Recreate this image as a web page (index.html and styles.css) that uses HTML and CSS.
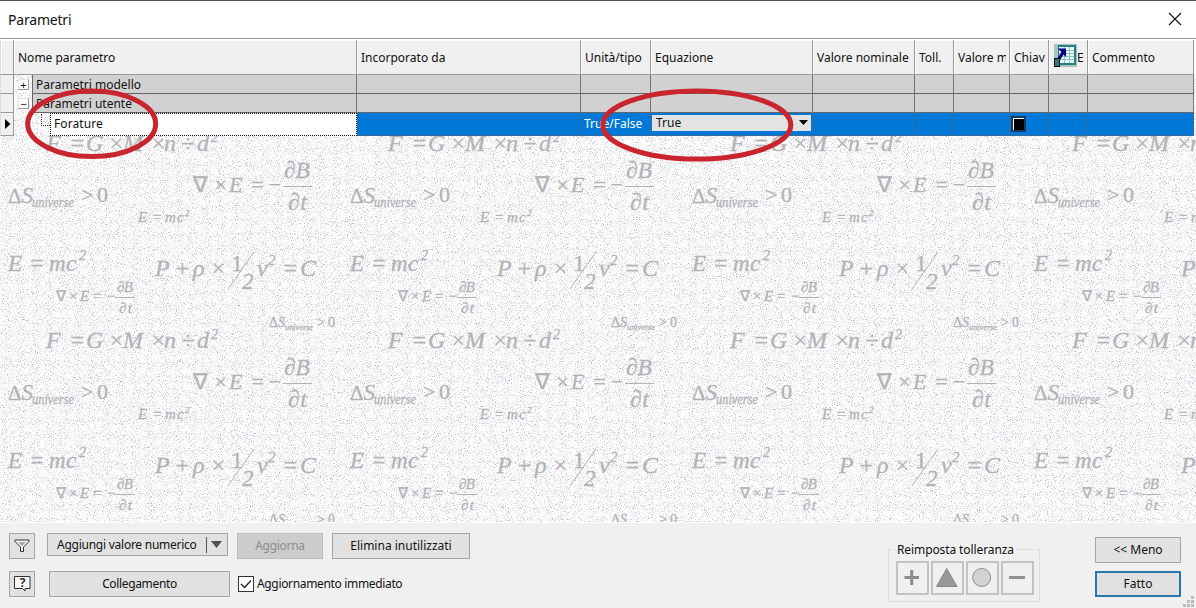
FILE: index.html
```html
<!DOCTYPE html>
<html lang="it">
<head>
    <meta charset="UTF-8">
    <meta name="viewport" content="width=device-width, initial-scale=1.0">
    <title>Parametri</title>
    <link rel="stylesheet" href="styles.css">
</head>
<body>
    <div class="dialog">
        <div class="titlebar">
            <h1>Parametri</h1>
            <svg class="close" width="14" height="14" viewBox="0 0 14 14"><path d="M1 1 L13 13 M13 1 L1 13" stroke="#111" stroke-width="1.1"/></svg>
        </div>

        <div class="content">
            <!-- formula wallpaper behind the grid -->
            <svg class="wallpaper" width="1196" height="447" viewBox="0 75 1196 447">
                <defs>
                    <filter id="speckle" x="0" y="0" width="100%" height="100%" color-interpolation-filters="sRGB">
                        <feTurbulence type="fractalNoise" baseFrequency="0.93" numOctaves="3" seed="7"/>
                        <feColorMatrix values="0 0 0 0 0.68  0 0 0 0 0.69  0 0 0 0 0.74  3.4 0 0 0 -1.85"/>
                    </filter>
                    <g id="formulas">
                        <text x="46 69 86 108 123 150 164 181 197" y="151" font-size="24">F=G×M×n÷d</text>
                        <text x="211" y="142" font-size="14">2</text>
                        <text x="8" y="203" font-size="21"><tspan font-style="normal">Δ</tspan><tspan font-size="23">S</tspan></text>
                        <text x="32" y="207" font-size="14" textLength="42" lengthAdjust="spacingAndGlyphs">universe</text>
                        <text x="81 97" y="202" font-size="22" font-style="normal">&gt;0</text>
                        <text x="193 213 229 250 267" y="192" font-size="22"><tspan font-style="normal">∇</tspan>×E=−</text>
                        <text x="284" y="178" font-size="24" textLength="26" lengthAdjust="spacingAndGlyphs">∂B</text>
                        <path d="M283 186.5H312"/>
                        <text x="288" y="210" font-size="24" textLength="19">∂t</text>
                        <text x="138 152 165 177" y="222" font-size="15">E=mc</text>
                        <text x="185" y="216" font-size="9">2</text>
                        <text x="8 29 49 66" y="271" font-size="23">E=mc</text>
                        <text x="79" y="260" font-size="14">2</text>
                        <text x="155 174 193 210" y="276" font-size="24">P+ρ×</text>
                        <text x="231" y="271" font-size="24" font-style="normal">1</text>
                        <path d="M228 289L254 252"/>
                        <text x="242" y="289" font-size="23">2</text>
                        <text x="257" y="276" font-size="24">v</text>
                        <text x="268" y="265" font-size="15">2</text>
                        <text x="282 300" y="276" font-size="24">=C</text>
                        <text x="56 68 80 92 106" y="301" font-size="15"><tspan font-style="normal">∇</tspan>×E=−</text>
                        <text x="117" y="292" font-size="15" textLength="16">∂B</text>
                        <path d="M115 297.5H135"/>
                        <text x="119" y="313" font-size="15" textLength="13">∂t</text>
                        <text x="269" y="327" font-size="14"><tspan font-style="normal">Δ</tspan>S</text>
                        <text x="285" y="330" font-size="9" textLength="28" lengthAdjust="spacingAndGlyphs">universe</text>
                        <text x="317 328" y="327" font-size="14" font-style="normal">&gt;0</text>
                    </g>
                </defs>
                <rect y="75" width="1196" height="447" fill="#fcfcfd"/>
                <rect y="75" width="1196" height="447" filter="url(#speckle)"/>
                <use href="#formulas"/>
                <use href="#formulas" x="342"/>
                <use href="#formulas" x="684"/>
                <use href="#formulas" x="1026"/>
                <use href="#formulas" y="197"/>
                <use href="#formulas" x="342" y="197"/>
                <use href="#formulas" x="684" y="197"/>
                <use href="#formulas" x="1026" y="197"/>
            </svg>

            <div class="grid">
                <div class="row head">
                    <div></div>
                    <div>Nome parametro</div>
                    <div>Incorporato da</div>
                    <div>Unità/tipo</div>
                    <div>Equazione</div>
                    <div>Valore nominale</div>
                    <div>Toll.</div>
                    <div class="clipped"><span>Valore m</span></div>
                    <div class="clipped"><span>Chiav</span></div>
                    <div class="export">
                        <svg width="24" height="24" viewBox="0 0 24 24">
                            <rect x="1" width="23" height="23" fill="#a9c3c4"/>
                            <path d="M5 1H23V21H5Z" fill="#26807f"/>
                            <path d="M6 3H21V19H6Z" fill="#e9f7f6"/>
                            <path d="M6 6.500H21M6 9.500H21M6 12.500H21M6 15.500H21M11.500 3V19M16.500 3V19" stroke="#8cc4c2"/>
                            <path d="M5 4.500H13V13L10.500 10.500L7 16L4.500 14L8.500 8Z" fill="#000080"/>
                            <rect x="1.500" y="14.500" width="5" height="8" fill="#367577" stroke="#111"/>
                        </svg><span>E</span>
                    </div>
                    <div>Commento</div>
                </div>
                <div class="row group">
                    <div></div>
                    <div class="tree"><i class="toggle">+</i><span>Parametri modello</span></div>
                    <div></div><div></div><div></div><div></div><div></div><div></div><div></div><div></div><div></div>
                </div>
                <div class="row group">
                    <div></div>
                    <div class="tree"><i class="toggle">−</i><span>Parametri utente</span></div>
                    <div></div><div></div><div></div><div></div><div></div><div></div><div></div><div></div><div></div>
                </div>
                <div class="row selected">
                    <div class="marker"><svg width="6" height="10" viewBox="0 0 6 10"><path d="M0 0L5.500 5L0 10Z"/></svg></div>
                    <div class="tree"><i class="branch"></i><span class="edit">Forature</span></div>
                    <div></div>
                    <div class="unit">True/False</div>
                    <div class="combo"><div><span>True</span><svg width="9" height="5" viewBox="0 0 9 5"><path d="M0 0H9L4.500 5Z"/></svg></div></div>
                    <div></div>
                    <div></div>
                    <div></div>
                    <div class="key"><i></i></div>
                    <div></div>
                    <div></div>
                </div>
            </div>
        </div>

        <div class="footer">
            <div class="actions">
                <div class="line">
                    <button class="button icon">
                        <svg width="16" height="14" viewBox="0 0 16 14" fill="none" stroke="#30323a"><path d="M1 1H15V2.500L9.500 8V12.500H6.500V8L1 2.500Z" fill="#f5f5f5"/><path d="M4 3H12L8 7Z" fill="#a8a8b0" stroke="none"/></svg>
                    </button>
                    <button class="button split"><span>Aggiungi valore numerico</span><i><svg width="11" height="7" viewBox="0 0 11 7"><path d="M0 0H11L5.500 7Z" fill="#505050"/></svg></i></button>
                    <button class="button update" disabled>Aggiorna</button>
                    <button class="button purge">Elimina inutilizzati</button>
                </div>
                <div class="line">
                    <button class="button icon">
                        <svg width="17" height="17" viewBox="0 0 17 17" fill="#f7f7f7" stroke="#30323a"><path d="M.5 1.500H16V13.500H11V16L8.500 13.500H.5Z"/><text x="8.500" y="12" text-anchor="middle" class="question">?</text></svg>
                    </button>
                    <button class="button link">Collegamento</button>
                    <label class="check"><svg width="16" height="16" viewBox="0 0 16 16" fill="none"><rect x=".5" y=".5" width="15" height="15" fill="#fff" stroke="#333"/><path d="M3 8L6.500 11.500L13 4.500" stroke="#222" stroke-width="1.300"/></svg><span>Aggiornamento immediato</span></label>
                </div>
            </div>

            <fieldset class="tolerance">
                <legend>Reimposta tolleranza</legend>
                <div class="tools">
                    <button><svg width="33" height="34" viewBox="0 0 33 34"><path d="M8.500 16.500H23M15.700 9V24" stroke="#8c8c8c" stroke-width="3"/></svg></button>
                    <button><svg width="33" height="34" viewBox="0 0 33 34"><path d="M5.500 25.500L15.700 7.500L26 25.500Z" fill="#999" stroke="#858585"/></svg></button>
                    <button><svg width="33" height="34" viewBox="0 0 33 34"><circle cx="15.700" cy="16.500" r="9" fill="#d2d2d2" stroke="#8d8d8d"/></svg></button>
                    <button><svg width="33" height="34" viewBox="0 0 33 34"><path d="M8 16.500H24" stroke="#929292" stroke-width="3"/></svg></button>
                </div>
            </fieldset>

            <div class="confirm">
                <button class="button">&lt;&lt; Meno</button>
                <button class="button primary">Fatto</button>
            </div>
            <svg class="grip" width="12" height="12" viewBox="0 0 12 12"><path d="M9 0h3v3h-3zM5 4h3v3h-3zM9 4h3v3h-3zM1 8h3v3h-3zM5 8h3v3h-3zM9 8h3v3h-3z" fill="#bdbdbd"/></svg>
        </div>

        <!-- red highlights over the dialog -->
        <svg class="marks" width="1196" height="608" viewBox="0 0 1196 608">
            <ellipse cx="91.700" cy="123.800" rx="64" ry="32.700"/>
            <ellipse cx="696.800" cy="125" rx="94" ry="34"/>
        </svg>
    </div>
</body>
</html>
```

FILE: styles.css
```css
* {
    box-sizing: border-box;
}
body {
    margin: 0;
    font-family: 'Noto Sans', 'Open Sans', sans-serif;
    font-size: 12px;
    color: #111;
    background-color: #f0f0f0;
}
svg {
    display: block;
    flex: none;
}
.dialog {
    position: relative;
    width: 1196px;
    height: 608px;
    overflow: hidden;
    display: flex;
    flex-direction: column;
}
.titlebar {
    height: 39px;
    display: flex;
    justify-content: space-between;
    align-items: center;
    padding: 0 14px 2px 8px;
    background-color: #fff;
    border-top: 1px solid #555;
    border-bottom: 1px solid #999;
}
.titlebar h1 {
    margin: 2px 0 0;
    font-size: 14px;
    font-weight: normal;
    letter-spacing: -0.2px;
}
.content {
    position: relative;
    height: 484px;
    border-bottom: 1px solid #fff;
    background-color: #fff;
}
.wallpaper {
    position: absolute;
    left: 0;
    top: 36px;
}
.wallpaper text {
    font-family: 'Liberation Serif', serif;
    font-style: italic;
    fill: #b3b3b5;
    stroke: #b3b3b5;
    stroke-width: 0.3;
}
.wallpaper text[font-style="normal"],
.wallpaper tspan[font-style="normal"] {
    font-style: normal;
}
.wallpaper path {
    stroke: #b3b3b5;
}

/* grid */
.grid {
    position: relative;
    padding: 1px 0 0;
}
.row {
    display: grid;
    grid-template-columns: 14px 343px 224px 70px 162px 102px 39px 56px 39px 39px 106px;
}
.row > div {
    display: flex;
    align-items: center;
    overflow: hidden;
    white-space: nowrap;
    border-right: 1px solid #777;
    border-bottom: 1px solid #666;
}
.row > div:first-child {
    background-color: #f0f0f0;
    border-color: #999;
    border-left: 1px solid #ddd;
}
.head {
    height: 35px;
}
.head > div {
    padding-left: 4px;
    background-color: #f0f0f0;
    border-color: #999;
    box-shadow: inset 1px 1px #fff;
}
.head .clipped {
    padding-right: 3px;
}
.clipped span {
    overflow: hidden;
}
.head .export {
    padding-left: 4px;
}
.head .export svg {
    margin-top: -2px;
}
.group {
    height: 19px;
}
.group > div {
    background-color: #d1d1d1;
}
.group .tree,
.selected .tree {
    background: none;
    border-bottom: 0;
}
.tree span {
    flex: 1;
    height: 100%;
    display: flex;
    align-items: center;
}
.group .tree span {
    padding-left: 3px;
    background-color: #d1d1d1;
    border-left: 1px solid #666;
    border-bottom: 1px solid #666;
}
.toggle {
    width: 11px;
    height: 11px;
    margin: 0 3px 0 4px;
    font-style: normal;
    font-size: 11px;
    line-height: 9px;
    text-align: center;
    background-color: #fafafa;
    border: 1px solid #e4e4e4;
    border-right-color: #999;
    border-bottom-color: #999;
}
.selected {
    height: 23px;
}
.selected > div {
    background-color: #0078d7;
    border-color: #376b9c;
}
.selected .tree {
    border-right: 0;
}
.selected .edit {
    height: 23px;
    padding: 0 0 2px 3px;
    letter-spacing: 0.1px;
    background-color: #fff;
    border: 1px dotted #111;
}
.branch {
    width: 9px;
    height: 12px;
    margin: -10px 0 0 27px;
    border-left: 1px dotted #333;
    border-bottom: 1px dotted #333;
}
.row .marker {
    padding-left: 4px;
}
.row .unit {
    padding: 0 0 1px 3px;
    color: #fff;
}
.combo {
    padding: 0 1px;
}
.combo div {
    flex: 1;
    display: flex;
    justify-content: space-between;
    align-items: center;
    height: 16px;
    margin-top: -3px;
    padding: 0 3px 0 4px;
    background-color: #e3e3e3;
}
.key {
    padding-left: 1px;
}
.key i {
    width: 15px;
    height: 16px;
    margin-top: -1px;
    background-color: #000;
    border: 2px solid #173b5e;
    box-shadow: inset 1px 1px #fff;
}

/* footer */
.footer {
    position: relative;
    height: 85px;
    display: flex;
    align-items: flex-start;
    background-color: #f0f0f0;
}
.actions {
    width: 888px;
    padding: 10px 0 0 9px;
    display: flex;
    flex-direction: column;
    gap: 12px;
}
.line {
    height: 26px;
    display: flex;
    align-items: flex-start;
}
.button {
    height: 26px;
    padding: 0 0 1px;
    font: inherit;
    color: #111;
    background-color: #e1e1e1;
    border: 1px solid #a5a5a5;
    display: flex;
    align-items: center;
    justify-content: center;
    white-space: nowrap;
}
.icon {
    width: 26px;
}
.question {
    font-family: 'Noto Sans', sans-serif;
    font-size: 12px;
    font-weight: bold;
    fill: #333;
    stroke: none;
}
.split {
    width: 181px;
    height: 23px;
    margin-left: 12px;
    padding: 0 0 0 9px;
    justify-content: space-between;
    letter-spacing: -0.25px;
}
.split i {
    height: 16px;
    padding: 0 5px 0 4px;
    display: flex;
    align-items: center;
    border-left: 1px solid #555;
}
.update {
    width: 86px;
    margin-left: 9px;
    letter-spacing: -0.3px;
}
.update:disabled {
    color: #8d8d8d;
    background-color: #ccc;
    border-color: #bfbfbf;
}
.purge {
    width: 138px;
    margin-left: 9px;
}
.link {
    width: 181px;
    margin-left: 14px;
    letter-spacing: -0.35px;
}
.check {
    height: 26px;
    margin-left: 8px;
    display: flex;
    align-items: center;
    gap: 3px;
    letter-spacing: -0.34px;
}
.check span {
    margin-top: -1px;
}
.tolerance {
    width: 152px;
    height: 61px;
    margin: 18px 0 0;
    padding: 0 0 0 7px;
    border: 1px solid #dcdcdc;
}
.tolerance legend {
    height: 17px;
    padding: 0 2px 0 1px;
    line-height: 17px;
    letter-spacing: -0.1px;
}
.tools {
    display: flex;
    gap: 2px;
    margin-top: 3px;
}
.tools button {
    width: 33px;
    height: 34px;
    padding: 0;
    background-color: #f0f0f0;
    border: 2px solid #c3c3c3;
}
.tools svg {
    margin: -2px;
}
.confirm {
    width: 86px;
    margin: 14px 0 0 55px;
    display: flex;
    flex-direction: column;
    gap: 8px;
}
.primary {
    border: 2px solid #2a78ab;
}
.grip {
    position: absolute;
    right: 2px;
    bottom: 0;
}
.marks {
    position: absolute;
    left: 0;
    top: 0;
    pointer-events: none;
}
.marks ellipse {
    fill: none;
    stroke: #c9252f;
    stroke-width: 5;
}
```
